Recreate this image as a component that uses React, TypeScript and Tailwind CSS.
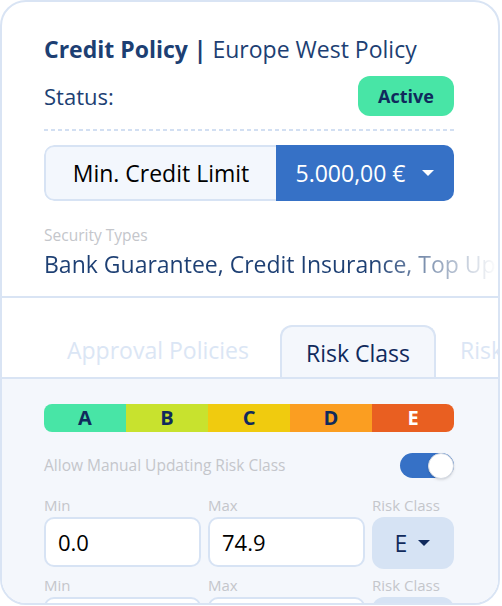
const riskBands = [
  { label: "A", cls: "bg-[#48e5a6] text-[#102a5c] rounded-l-[8px]" },
  { label: "B", cls: "bg-[#c8e22e] text-[#102a5c]" },
  { label: "C", cls: "bg-[#f0cb0f] text-[#102a5c]" },
  { label: "D", cls: "bg-[#fb9e21] text-[#102a5c]" },
  { label: "E", cls: "bg-[#e95f21] text-white rounded-r-[8px]" },
];

function Caret({ className }: { className: string }) {
  return (
    <svg width="14" height="8" viewBox="0 0 14 8" className={className}>
      <path d="M1 1h12L7 7z" fill="currentColor" />
    </svg>
  );
}

function RangeRow({ min, max, risk }: { min: string; max: string; risk: string }) {
  return (
    <div className="flex gap-[7px]">
      <div className="w-[157px]">
        <div className="h-[20px] leading-[20px] text-[15px] text-[#c4c6cb]">Min</div>
        <div className="mt-[2px] h-[50px] rounded-[10px] border-2 border-[#d7e3f4] bg-white px-[12px] flex items-center text-[22px] text-black">
          {min}
        </div>
      </div>
      <div className="w-[157px]">
        <div className="h-[20px] leading-[20px] text-[15px] text-[#c4c6cb]">Max</div>
        <div className="mt-[2px] h-[50px] rounded-[10px] border-2 border-[#d7e3f4] bg-white px-[12px] flex items-center text-[22px] text-black">
          {max}
        </div>
      </div>
      <div className="w-[82px]">
        <div className="h-[20px] leading-[20px] text-[15px] text-[#c4c6cb] whitespace-nowrap">Risk Class</div>
        <div className="mt-[2px] h-[52px] rounded-[12px] bg-[#d6e3f4] flex items-center justify-center gap-[10px] text-[23px] text-[#102a5c]">
          {risk}
          {risk && <Caret className="text-[#102a5c]" />}
        </div>
      </div>
    </div>
  );
}

export default function App() {
  return (
    <div className="w-[502px] h-[606px] bg-white" style={{ fontFamily: "'Open Sans', sans-serif" }}>
      <div className="w-[500px] h-[605px] border-2 border-[#d9e4f4] rounded-[26px] overflow-hidden flex flex-col">
        <div className="pl-[42px] pt-[32px] h-[294px] shrink-0">
          <div className="h-[30px] leading-[30px] text-[23px] text-[#1d3f73] whitespace-nowrap">
            <span className="font-bold">Credit Policy |</span> Europe West Policy
          </div>
          <div className="mt-[12px] h-[40px] w-[410px] flex items-center justify-between">
            <span className="text-[22px] text-[#1d3f73]">Status:</span>
            <span className="w-[96px] h-[40px] rounded-[12px] bg-[#48e5a6] flex items-center justify-center text-[18px] font-bold text-[#102a5c]">
              Active
            </span>
          </div>
          <div className="mt-[13px] w-[410px] h-[2px] bg-[repeating-linear-gradient(to_right,#d2dff2_0_4px,transparent_4px_7px)]" />
          <div className="mt-[14px] w-[410px] h-[56px] flex rounded-[10px] overflow-hidden">
            <div className="w-[232px] bg-[#f3f7fd] border-2 border-r-0 border-[#d7e3f4] rounded-l-[10px] flex items-center justify-center text-[23px] text-black">
              Min. Credit Limit
            </div>
            <div className="flex-1 bg-[#3671c6] flex items-center justify-center gap-[15px] text-[23px] text-white">
              5.000,00 €
              <Caret className="text-white" />
            </div>
          </div>
          <div className="mt-[24px] h-[20px] leading-[20px] text-[15.5px] text-[#c4c6cb]">Security Types</div>
          <div className="mt-[4px] h-[30px] leading-[30px] text-[23px] whitespace-nowrap overflow-hidden bg-[linear-gradient(to_right,#1d3f73_72%,rgba(29,63,115,0.03)_99%)] bg-clip-text text-transparent">
            Bank Guarantee, Credit Insurance, Top Up
          </div>
        </div>
        <div className="border-t-2 border-[#d9e4f4] flex-1 flex flex-col">
          <div className="h-[81px] shrink-0 bg-white border-b-2 border-[#d9e4f4] flex items-end pl-[41px] whitespace-nowrap overflow-hidden">
            <div className="h-[54px] px-[24px] flex items-center text-[23px] text-[#dbe6f5]">Approval Policies</div>
            <div className="ml-[7px] h-[54px] -mb-[2px] px-[24px] flex items-center text-[23px] text-[#102a5c] bg-[#f4f7fc] border-2 border-b-0 border-[#d9e4f4] rounded-t-[12px]">
              Risk Class
            </div>
            <div className="h-[54px] px-[24px] flex items-center text-[23px] text-[#dbe6f5]">Risk Score</div>
          </div>
          <div className="flex-1 bg-[#f4f7fc] pl-[42px] pt-[25px]">
            <div className="w-[410px] h-[28px] flex">
              {riskBands.map((b) => (
                <div key={b.label} className={`flex-1 flex items-center justify-center text-[20px] font-bold ${b.cls}`}>
                  {b.label}
                </div>
              ))}
            </div>
            <div className="mt-[21px] w-[410px] h-[25px] flex items-center justify-between">
              <span className="text-[15.5px] text-[#c4c6cb]">Allow Manual Updating Risk Class</span>
              <span className="w-[54px] h-[25px] rounded-full bg-[#3671c6] flex items-center justify-end">
                <span className="w-[26px] h-[26px] rounded-full bg-white border border-[#d6dbe3] shadow-sm" />
              </span>
            </div>
            <div className="mt-[17px]">
              <RangeRow min="0.0" max="74.9" risk="E" />
            </div>
            <div className="mt-[6px]">
              <RangeRow min="" max="" risk="" />
            </div>
          </div>
        </div>
      </div>
    </div>
  );
}
